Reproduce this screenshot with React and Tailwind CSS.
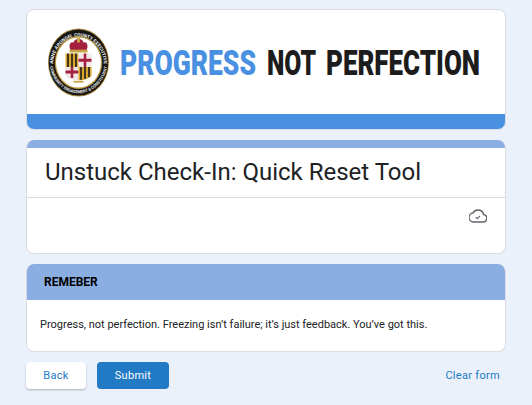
const Seal = () => (
  <g transform="translate(-0.5 -6.6) scale(1 1.115)">
    <defs>
      <path id="sealTop" d="M 28 64 A 25.5 25.5 0 1 1 76 64" />
      <path id="sealBottom" d="M 25 41 A 29 29 0 1 0 79 41" />
    </defs>
    <circle cx="52" cy="53" r="30.5" fill="#a8873a" />
    <circle cx="52" cy="53" r="29.7" fill="#161616" />
    <text fontFamily="Roboto" fontSize="4.6" fontWeight="700" fill="#f2f2f2">
      <textPath href="#sealTop" startOffset="50%" textAnchor="middle">ANNE ARUNDEL COUNTY EXECUTIVE</textPath>
    </text>
    <text fontFamily="Roboto" fontSize="3.9" fontWeight="700" fill="#e8e8e8">
      <textPath href="#sealBottom" startOffset="50%" textAnchor="middle">COMMUNITY ENGAGEMENT &amp; CONSTITUENT</textPath>
    </text>
    <circle cx="52" cy="53" r="23.7" fill="#b9973f" />
    <circle cx="52" cy="53" r="22.5" fill="#ffffff" />
    {/* crown */}
    <path d="M43 39 q0 -5 4 -4 q1 -3 5 -3 q4 0 5 3 q4 -1 4 4 l-1 3 h-16z" fill="#a3213f" />
    <rect x="50.5" y="31" width="3" height="4" fill="#c9a545" />
    <rect x="43" y="41.5" width="18" height="2.5" fill="#c9a545" />
    {/* shield */}
    <rect x="39" y="45" width="13" height="12" fill="#d9a32c" />
    <path d="M41.5 45v12M45.5 45v12M49.5 45v12" stroke="#1c1c1c" strokeWidth="1.6" />
    <rect x="52" y="45" width="13" height="12" fill="#f3e6e8" />
    <path d="M58.5 45v12M52 51h13" stroke="#a3213f" strokeWidth="2.6" />
    <path d="M39 57h13v12q-8 0 -13 -4z" fill="#f3e6e8" />
    <path d="M45.5 57v10M39 61.5h13" stroke="#a3213f" strokeWidth="2.6" />
    <path d="M52 57h13v8q-5 4 -13 4z" fill="#d9a32c" />
    <path d="M54.5 57v11.5M58.5 57v10.5M62.5 57v9" stroke="#1c1c1c" strokeWidth="1.6" />
    <rect x="47" y="69.5" width="10" height="1.6" fill="#c9a545" />
  </g>
);

const Banner = () => (
  <svg viewBox="0 0 478 104" className="block w-full h-[104px]">
    <Seal />
    <text x="93" y="65" fontFamily="Roboto" fontWeight="900" fontSize="35" fill="#4a90e2" textLength="136" lengthAdjust="spacingAndGlyphs">PROGRESS</text>
    <text x="240" y="65" fontFamily="Roboto" fontWeight="900" fontSize="35" fill="#1c1c1c" textLength="49" lengthAdjust="spacingAndGlyphs">NOT</text>
    <text x="299" y="65" fontFamily="Roboto" fontWeight="900" fontSize="35" fill="#1c1c1c" textLength="154" lengthAdjust="spacingAndGlyphs">PERFECTION</text>
  </svg>
);

const CloudCheck = () => (
  <svg viewBox="0 0 24 24" className="w-[18px] h-[18px]" fill="none" stroke="#5f6368" strokeWidth="1.9">
    <path d="M19.35 10.04A7.49 7.49 0 0 0 12 4a7.5 7.5 0 0 0-6.65 4.04A6 6 0 0 0 6 20h13a5 5 0 0 0 .35-9.96z" />
    <path d="M9 13.5l2 2 3.8-3.8" strokeWidth="1.5" />
  </svg>
);

export default function App() {
  return (
    <div className="min-h-screen bg-[#ebf1fa] pt-[9px] font-['Roboto',sans-serif]">
      <div className="w-[480px] ml-[26px] flex flex-col gap-[10px]">
        {/* Banner */}
        <div className="bg-white border border-[#dadce0] rounded-lg overflow-hidden">
          <Banner />
          <div className="h-[15px] bg-[#4a90e2]"></div>
        </div>

        {/* Title card */}
        <div className="bg-white border border-[#dadce0] border-t-0 rounded-lg overflow-hidden">
          <div className="h-2 bg-[#8aaee2] -mx-px"></div>
          <div className="h-[50px] border-b border-[#dadce0] pl-[18px] pt-[9px]">
            <h1 className="text-[24px] leading-[30px] text-[#202124]">Unstuck Check-In: Quick Reset Tool</h1>
          </div>
          <div className="h-[55px] flex justify-end pr-[18px] pt-[9px]">
            <CloudCheck />
          </div>
        </div>

        {/* Section */}
        <div className="bg-white border border-[#dadce0] border-t-0 rounded-lg overflow-hidden">
          <div className="h-9 bg-[#8aaee2] -mx-px pl-[18px] pb-px flex items-center">
            <h2 className="text-[12px] font-bold text-black">REMEBER</h2>
          </div>
          <p className="h-[51px] pl-[13px] pt-[16px] text-[11px] leading-[18px] text-[#202124]">
            Progress, not perfection. Freezing isn’t failure; it’s just feedback. You’ve got this.
          </p>
        </div>

        {/* Buttons */}
        <div className="flex items-center">
          <button className="w-[60px] h-[27px] pt-px bg-white rounded text-[11px] tracking-[0.3px] text-[#2279c4] shadow-[0_1px_2px_rgba(60,64,67,0.35)]">Back</button>
          <button className="w-[72px] h-[27px] pt-px ml-[11px] bg-[#2279c4] rounded text-[11px] tracking-[0.3px] text-white">Submit</button>
          <button className="ml-auto mr-[6px] pt-px text-[11px] tracking-[0.3px] text-[#2279c4]">Clear form</button>
        </div>
      </div>
    </div>
  );
}
